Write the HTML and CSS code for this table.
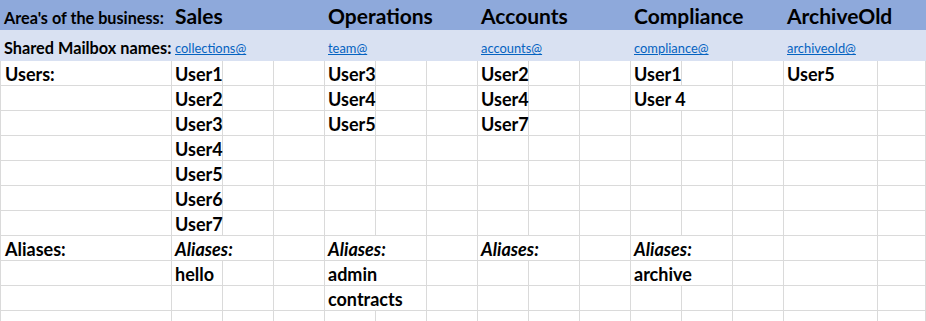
FILE: index.html
```html
<!DOCTYPE html>
<html>
<head>
<meta charset="utf-8">
<link rel="stylesheet" href="styles.css">
</head>
<body>
<div class="sheet">
  <!-- Row 1 -->
  <div class="c h1 first lbl-area">Area's of the business:</div>
  <div class="c h1 s3 area">Sales</div>
  <div class="c h1 s3 area">Operations</div>
  <div class="c h1 s3 area">Accounts</div>
  <div class="c h1 s3 area">Compliance</div>
  <div class="c h1 s2 area">ArchiveOld</div>

  <!-- Row 2 -->
  <div class="c h2 first lbl-shared">Shared Mailbox names:</div>
  <div class="c h2 s3"><a class="link" href="#">collections@</a></div>
  <div class="c h2 s3"><a class="link" href="#">team@</a></div>
  <div class="c h2 s3"><a class="link" href="#">accounts@</a></div>
  <div class="c h2 s3"><a class="link" href="#">compliance@</a></div>
  <div class="c h2 s2"><a class="link" href="#">archiveold@</a></div>

  <!-- Row 3 -->
  <div class="c w first">Users:</div>
  <div class="c w">User1</div><div class="c w"></div><div class="c w"></div>
  <div class="c w">User3</div><div class="c w"></div><div class="c w"></div>
  <div class="c w">User2</div><div class="c w"></div><div class="c w"></div>
  <div class="c w">User1</div><div class="c w"></div><div class="c w"></div>
  <div class="c w">User5</div><div class="c w"></div>

  <!-- Row 4 -->
  <div class="c w first"></div>
  <div class="c w">User2</div><div class="c w"></div><div class="c w"></div>
  <div class="c w">User4</div><div class="c w"></div><div class="c w"></div>
  <div class="c w">User4</div><div class="c w"></div><div class="c w"></div>
  <div class="c w s2">User 4</div><div class="c w"></div>
  <div class="c w"></div><div class="c w"></div>

  <!-- Row 5 -->
  <div class="c w first"></div>
  <div class="c w">User3</div><div class="c w"></div><div class="c w"></div>
  <div class="c w">User5</div><div class="c w"></div><div class="c w"></div>
  <div class="c w">User7</div><div class="c w"></div><div class="c w"></div>
  <div class="c w"></div><div class="c w"></div><div class="c w"></div>
  <div class="c w"></div><div class="c w"></div>

  <!-- Row 6 -->
  <div class="c w first"></div>
  <div class="c w">User4</div><div class="c w"></div><div class="c w"></div>
  <div class="c w"></div><div class="c w"></div><div class="c w"></div>
  <div class="c w"></div><div class="c w"></div><div class="c w"></div>
  <div class="c w"></div><div class="c w"></div><div class="c w"></div>
  <div class="c w"></div><div class="c w"></div>

  <!-- Row 7 -->
  <div class="c w first"></div>
  <div class="c w">User5</div><div class="c w"></div><div class="c w"></div>
  <div class="c w"></div><div class="c w"></div><div class="c w"></div>
  <div class="c w"></div><div class="c w"></div><div class="c w"></div>
  <div class="c w"></div><div class="c w"></div><div class="c w"></div>
  <div class="c w"></div><div class="c w"></div>

  <!-- Row 8 -->
  <div class="c w first"></div>
  <div class="c w">User6</div><div class="c w"></div><div class="c w"></div>
  <div class="c w"></div><div class="c w"></div><div class="c w"></div>
  <div class="c w"></div><div class="c w"></div><div class="c w"></div>
  <div class="c w"></div><div class="c w"></div><div class="c w"></div>
  <div class="c w"></div><div class="c w"></div>

  <!-- Row 9 -->
  <div class="c w first"></div>
  <div class="c w">User7</div><div class="c w"></div><div class="c w"></div>
  <div class="c w"></div><div class="c w"></div><div class="c w"></div>
  <div class="c w"></div><div class="c w"></div><div class="c w"></div>
  <div class="c w"></div><div class="c w"></div><div class="c w"></div>
  <div class="c w"></div><div class="c w"></div>

  <!-- Row 10 -->
  <div class="c w first">Aliases:</div>
  <div class="c w s2 it">Aliases:</div><div class="c w"></div>
  <div class="c w s2 it">Aliases:</div><div class="c w"></div>
  <div class="c w s2 it">Aliases:</div><div class="c w"></div>
  <div class="c w s2 it">Aliases:</div><div class="c w"></div>
  <div class="c w"></div><div class="c w"></div>

  <!-- Row 11 -->
  <div class="c w first"></div>
  <div class="c w">hello</div><div class="c w"></div><div class="c w"></div>
  <div class="c w s2">admin</div><div class="c w"></div>
  <div class="c w"></div><div class="c w"></div><div class="c w"></div>
  <div class="c w s2">archive</div><div class="c w"></div>
  <div class="c w"></div><div class="c w"></div>

  <!-- Row 12 -->
  <div class="c w first"></div>
  <div class="c w"></div><div class="c w"></div><div class="c w"></div>
  <div class="c w s2">contracts</div><div class="c w"></div>
  <div class="c w"></div><div class="c w"></div><div class="c w"></div>
  <div class="c w"></div><div class="c w"></div><div class="c w"></div>
  <div class="c w"></div><div class="c w"></div>

  <!-- Row 13 -->
  <div class="c w first"></div>
  <div class="c w"></div><div class="c w"></div><div class="c w"></div>
  <div class="c w"></div><div class="c w"></div><div class="c w"></div>
  <div class="c w"></div><div class="c w"></div><div class="c w"></div>
  <div class="c w"></div><div class="c w"></div><div class="c w"></div>
  <div class="c w"></div><div class="c w"></div>
</div>
</body>
</html>
```

FILE: styles.css
```css
html, body {
  margin: 0;
  padding: 0;
  background: #ffffff;
  overflow: hidden;
}

.sheet {
  display: grid;
  grid-template-columns: 172px repeat(12, 51px) 94px 48px;
  grid-template-rows: 30px 31px repeat(11, 25px);
  width: 926px;
  height: 321px;
  overflow: hidden;
  font-family: Lato, "Liberation Sans", sans-serif;
  font-weight: 700;
  color: #000000;
}

.c {
  box-sizing: border-box;
  display: flex;
  align-items: flex-end;
  white-space: nowrap;
  line-height: 1;
  padding-left: 3px;
  overflow: visible;
  min-width: 0;
}

.s2 { grid-column: span 2; }
.s3 { grid-column: span 3; }

.h1 {
  background: #8ea9db;
  padding-bottom: 4px;
}

.h2 {
  background: #d9e1f2;
  padding-bottom: 6px;
}

.first { padding-left: 4px; }

.lbl-area { font-size: 16.2px; }
.area { font-size: 21px; }
.lbl-shared { font-size: 16.3px; padding-bottom: 5px; }

.link {
  font-size: 12.9px;
  font-weight: 400;
  color: #0563c1;
  text-decoration: underline;
}

.w {
  font-size: 18px;
  border-right: 1px solid #dadada;
  border-bottom: 1px solid #dadada;
  padding-bottom: 2px;
}

.w.first { border-left: 1px solid #dadada; }

.it { font-style: italic; }
```
